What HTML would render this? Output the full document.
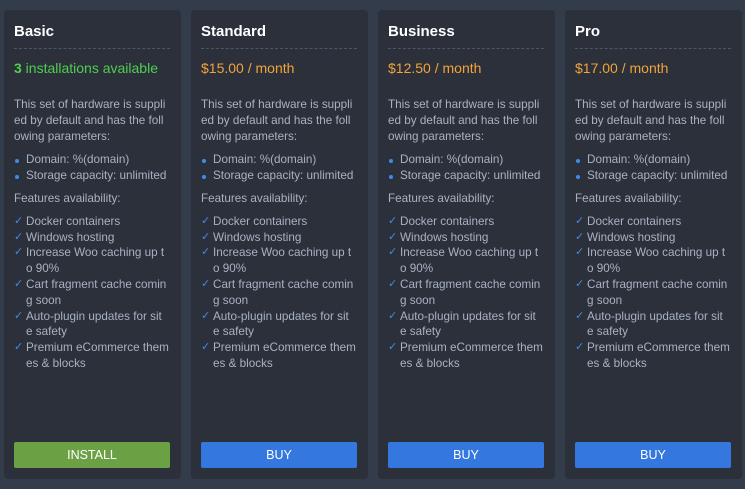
<!DOCTYPE html>
<html><head><meta charset="utf-8"><style>
body{margin:0;width:745px;height:489px;background:#333c4b;font-family:"Liberation Sans",sans-serif;overflow:hidden;position:relative}
.c{position:absolute;top:10px;width:177px;height:469px;background:#2b303b;border-radius:4px}
.t{position:absolute;left:10px;top:13px;font-size:15px;font-weight:bold;color:#fff}
.hr{position:absolute;left:10px;right:11px;top:38px;border-top:1px dashed #4d5566}
.p{position:absolute;left:10px;top:50px;font-size:14px;color:#f2a33a}
.p.g{color:#4fcf4f}
.b{position:absolute;left:10px;top:87px;width:160px;font-size:11.7px;line-height:15.8px;color:#a9b2c2;white-space:nowrap}
.li{position:relative;padding-left:12px}
.dot:before{content:"";position:absolute;left:1px;top:7px;width:4px;height:4px;border-radius:50%;background:#3b8ee8}
.ck:before{content:"✓";position:absolute;left:0;top:0;color:#3b8ee8;font-size:11px}
.btn{position:absolute;left:10px;top:432px;width:156px;height:26px;border-radius:2px;background:#3477de;color:#fff;font-size:12.5px;text-align:center;line-height:26px}
.btn.g{background:#6ba144}
</style></head><body>
<div class="c" style="left:4px"><div class="t">Basic</div><div class="hr"></div><div class="p g"><b>3</b> installations available</div><div class="btn g">INSTALL</div>
<div class="b">This set of hardware is suppli<br>ed by default and has the foll<br>owing parameters:<div style="height:8px"></div><div class="li dot">Domain: %(domain)</div><div class="li dot">Storage capacity: unlimited</div><div style="height:7px"></div>Features availability:<div style="height:7px"></div><div class="li ck">Docker containers</div><div class="li ck">Windows hosting</div><div class="li ck">Increase Woo caching up t<br>o 90%</div><div class="li ck">Cart fragment cache comin<br>g soon</div><div class="li ck">Auto-plugin updates for sit<br>e safety</div><div class="li ck">Premium eCommerce them<br>es &amp; blocks</div></div></div>
<div class="c" style="left:191px"><div class="t">Standard</div><div class="hr"></div><div class="p">$15.00 / month</div><div class="btn">BUY</div>
<div class="b">This set of hardware is suppli<br>ed by default and has the foll<br>owing parameters:<div style="height:8px"></div><div class="li dot">Domain: %(domain)</div><div class="li dot">Storage capacity: unlimited</div><div style="height:7px"></div>Features availability:<div style="height:7px"></div><div class="li ck">Docker containers</div><div class="li ck">Windows hosting</div><div class="li ck">Increase Woo caching up t<br>o 90%</div><div class="li ck">Cart fragment cache comin<br>g soon</div><div class="li ck">Auto-plugin updates for sit<br>e safety</div><div class="li ck">Premium eCommerce them<br>es &amp; blocks</div></div></div>
<div class="c" style="left:378px"><div class="t">Business</div><div class="hr"></div><div class="p">$12.50 / month</div><div class="btn">BUY</div>
<div class="b">This set of hardware is suppli<br>ed by default and has the foll<br>owing parameters:<div style="height:8px"></div><div class="li dot">Domain: %(domain)</div><div class="li dot">Storage capacity: unlimited</div><div style="height:7px"></div>Features availability:<div style="height:7px"></div><div class="li ck">Docker containers</div><div class="li ck">Windows hosting</div><div class="li ck">Increase Woo caching up t<br>o 90%</div><div class="li ck">Cart fragment cache comin<br>g soon</div><div class="li ck">Auto-plugin updates for sit<br>e safety</div><div class="li ck">Premium eCommerce them<br>es &amp; blocks</div></div></div>
<div class="c" style="left:565px"><div class="t">Pro</div><div class="hr"></div><div class="p">$17.00 / month</div><div class="btn">BUY</div>
<div class="b">This set of hardware is suppli<br>ed by default and has the foll<br>owing parameters:<div style="height:8px"></div><div class="li dot">Domain: %(domain)</div><div class="li dot">Storage capacity: unlimited</div><div style="height:7px"></div>Features availability:<div style="height:7px"></div><div class="li ck">Docker containers</div><div class="li ck">Windows hosting</div><div class="li ck">Increase Woo caching up t<br>o 90%</div><div class="li ck">Cart fragment cache comin<br>g soon</div><div class="li ck">Auto-plugin updates for sit<br>e safety</div><div class="li ck">Premium eCommerce them<br>es &amp; blocks</div></div></div>
</body></html>
